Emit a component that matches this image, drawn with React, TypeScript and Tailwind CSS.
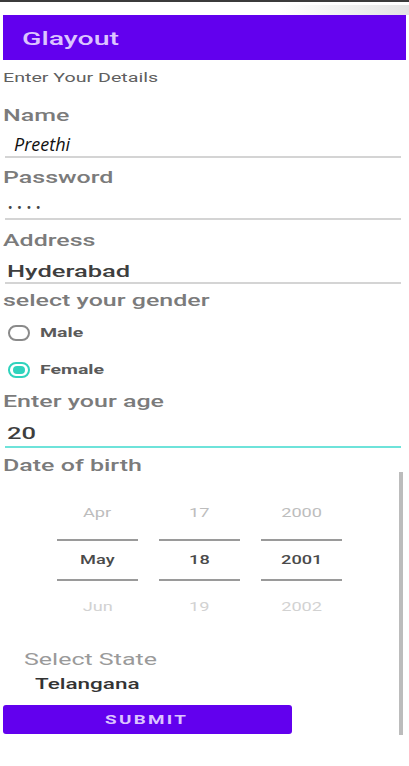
import React from "react";

const S = "inline-block origin-left whitespace-nowrap";
const SC = "inline-block origin-center whitespace-nowrap";

function Label({ text, h = "h-[40px]" }: { text: string; h?: string }) {
  return (
    <div className={`${h} flex items-center`}>
      <span className={`${S} scale-x-[1.47] text-[17px] font-medium text-[#7b7b7b]`}>{text}</span>
    </div>
  );
}

function Picker() {
  const cols = [
    ["Apr", "May", "Jun"],
    ["17", "18", "19"],
    ["2000", "2001", "2002"],
  ];
  return (
    <div className="flex gap-[21px] pl-[57px]">
      {cols.map((c, i) => (
        <div key={i} className="w-[81px] flex flex-col">
          <div className="h-[55px] pt-[2px] flex items-center justify-center">
            <span className={`${SC} scale-x-[1.4] text-[13px] text-[#bdbdbd]`}>{c[0]}</span>
          </div>
          <div className="h-[2px] bg-[#9a9a9a]" />
          <div className="h-[38px] flex items-center justify-center">
            <span className={`${SC} scale-x-[1.4] text-[13px] font-medium text-[#4a4a4a]`}>{c[1]}</span>
          </div>
          <div className="h-[2px] bg-[#9a9a9a]" />
          <div className="h-[52px] flex items-center justify-center">
            <span className={`${SC} scale-x-[1.4] text-[13px] text-[#d2d2d2]`}>{c[2]}</span>
          </div>
        </div>
      ))}
    </div>
  );
}

export default function App() {
  return (
    <div className="relative w-[409px] h-[766px] bg-white overflow-hidden font-[Roboto,sans-serif]">
      <div className="h-[2px] bg-[#3b3b3b]" />
      <div className="h-[13px] flex justify-end">
        <div className="w-[130px] h-[10px] mt-[3px] bg-gradient-to-r from-white to-[#e4e4e4]" />
      </div>
      <header className="mx-[3px] h-[45px] bg-[#6200ee] flex items-center pl-[19px] pt-[3px]">
        <span className={`${S} scale-x-[1.5] text-[19px] font-medium text-[#dcc4ff]`}>Glayout</span>
      </header>
      <div className="h-[36px] flex items-center px-[3px]">
        <span className={`${S} scale-x-[1.57] text-[12.5px] text-[#606060]`}>Enter Your Details</span>
      </div>

      <div className="pl-[3px] pr-[8px]">
        <Label text="Name" />
        <div className="h-[22px] ml-[2px] border-b-2 border-[#d4d4d4] flex items-center pl-[9px]">
          <span className="text-[18px] italic text-[#111] font-['Open_Sans',sans-serif] -mt-[4px]">Preethi</span>
        </div>

        <Label text="Password" />
        <div className="h-[22px] ml-[2px] border-b-2 border-[#d4d4d4] flex items-center pl-[3px]">
          <span className="text-[12px] font-bold text-[#444] tracking-[5px] -mt-[1px]">••••</span>
        </div>

        <Label text="Address" h="h-[42px]" />
        <div className="h-[22px] ml-[2px] border-b-2 border-[#d4d4d4] flex items-center pl-[2px]">
          <span className={`${S} scale-x-[1.5] text-[17px] font-medium text-[#3e3e3e]`}>Hyderabad</span>
        </div>

        <Label text="select your gender" h="h-[34px]" />
        <div className="h-[30px] flex items-center gap-[10px] pl-[5px]">
          <div className="w-[22px] h-[16px] rounded-full border-2 border-[#8a8a8a]" />
          <span className={`${S} scale-x-[1.5] text-[13px] font-bold text-[#5a5a5a]`}>Male</span>
        </div>
        <div className="h-[44px] flex items-center gap-[10px] pl-[5px]">
          <div className="w-[22px] h-[16px] rounded-full border-2 border-[#2fd3bd] flex items-center justify-center">
            <div className="w-[12px] h-[8px] rounded-full bg-[#2fd3bd]" />
          </div>
          <span className={`${S} scale-x-[1.5] text-[13px] font-bold text-[#5a5a5a]`}>Female</span>
        </div>

        <Label text="Enter your age" h="h-[20px]" />
        <div className="h-[36px] pt-[10px] ml-[2px] border-b-2 border-[#6ee3da] flex items-center pl-[2px]">
          <span className={`${S} scale-x-[1.5] text-[17px] font-medium text-[#3e3e3e]`}>20</span>
        </div>

        <Label text="Date of birth" h="h-[36px]" />
      </div>

      <Picker />

      <div className="pl-[24px] mt-[17px] h-[20px] flex items-center">
        <span className={`${S} scale-x-[1.47] text-[17px] text-[#9a9a9a]`}>Select State</span>
      </div>
      <div className="pl-[35px] mt-[4px] h-[20px] flex items-center">
        <span className={`${S} scale-x-[1.5] text-[15px] font-medium text-[#333]`}>Telangana</span>
      </div>
      <div className="ml-[3px] mt-[11px] w-[289px] h-[29px] rounded-[3px] bg-[#6200ee] flex items-center justify-center pr-[2px]">
        <span className={`${SC} scale-x-[1.45] text-[13px] font-bold tracking-[0.12em] text-[#dcc4ff]`}>SUBMIT</span>
      </div>

      <div className="absolute left-[399px] top-[472px] w-[4px] h-[263px] bg-[#bcbcbc]" />
    </div>
  );
}
